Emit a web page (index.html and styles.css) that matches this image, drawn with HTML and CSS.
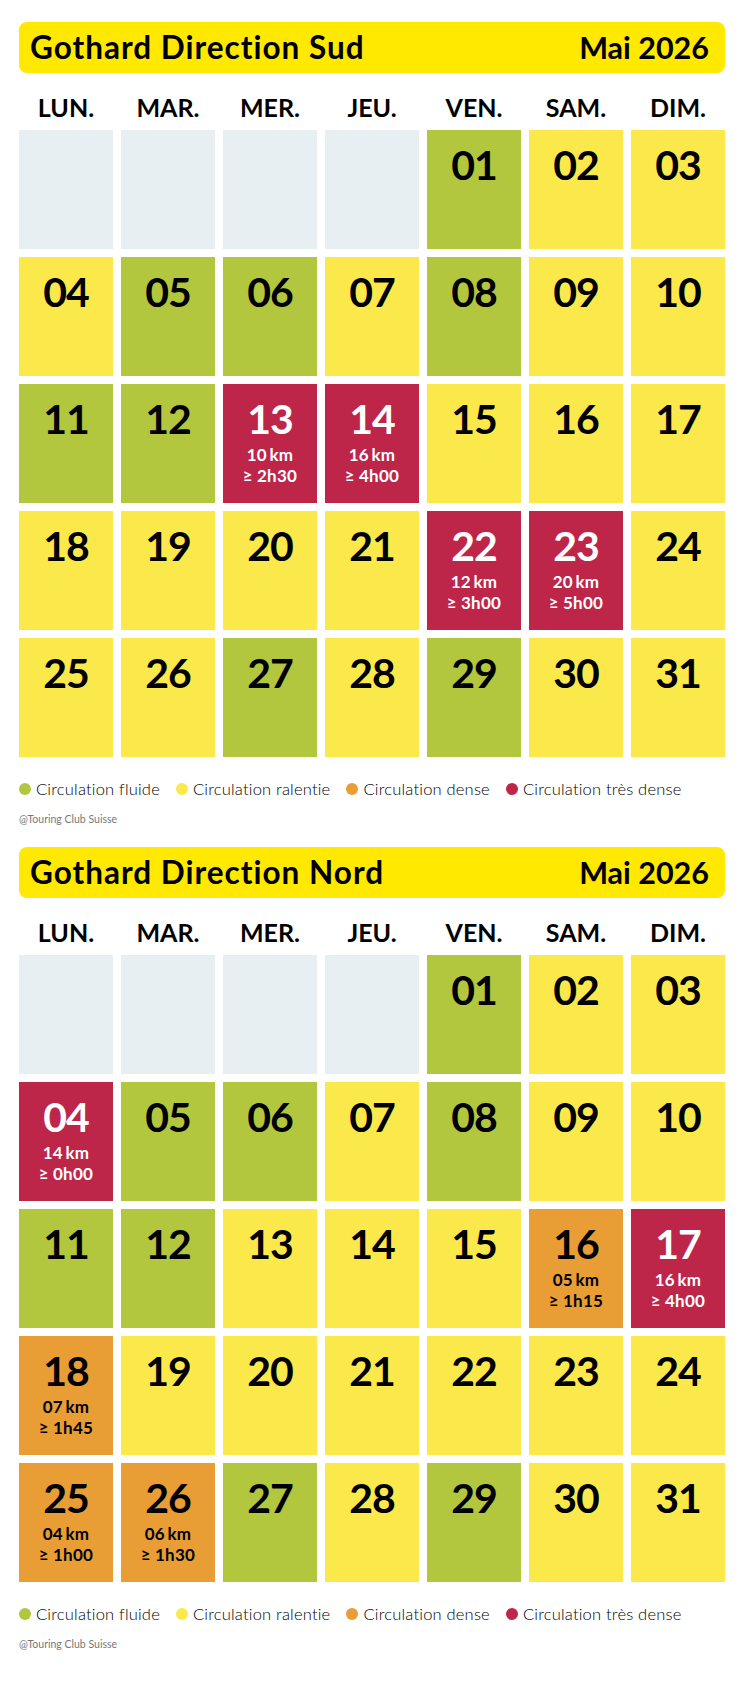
FILE: index.html
```html
<!DOCTYPE html>
<html lang="fr">
<head>
<meta charset="utf-8">
<title>Gothard – Mai 2026</title>
<link rel="stylesheet" href="styles.css">
</head>
<body>
<div class="page">
  <section class="cal">
    <div class="cal-head"><span class="title">Gothard Direction Sud</span><span class="month">Mai 2026</span></div>
    <div class="days"><span>LUN.</span><span>MAR.</span><span>MER.</span><span>JEU.</span><span>VEN.</span><span>SAM.</span><span>DIM.</span></div>
    <div class="grid">
      <div class="cell e"></div><div class="cell e"></div><div class="cell e"></div><div class="cell e"></div>
      <div class="cell g"><span class="n">01</span></div><div class="cell y"><span class="n">02</span></div><div class="cell y"><span class="n">03</span></div>
      <div class="cell y"><span class="n">04</span></div><div class="cell g"><span class="n">05</span></div><div class="cell g"><span class="n">06</span></div><div class="cell y"><span class="n">07</span></div><div class="cell g"><span class="n">08</span></div><div class="cell y"><span class="n">09</span></div><div class="cell y"><span class="n">10</span></div>
      <div class="cell g"><span class="n">11</span></div><div class="cell g"><span class="n">12</span></div>
      <div class="cell r"><span class="n">13</span><span class="s">10&#8201;km</span><span class="s"><span class="ge">≥</span>2h30</span></div>
      <div class="cell r"><span class="n">14</span><span class="s">16&#8201;km</span><span class="s"><span class="ge">≥</span>4h00</span></div>
      <div class="cell y"><span class="n">15</span></div><div class="cell y"><span class="n">16</span></div><div class="cell y"><span class="n">17</span></div>
      <div class="cell y"><span class="n">18</span></div><div class="cell y"><span class="n">19</span></div><div class="cell y"><span class="n">20</span></div><div class="cell y"><span class="n">21</span></div>
      <div class="cell r"><span class="n">22</span><span class="s">12&#8201;km</span><span class="s"><span class="ge">≥</span>3h00</span></div>
      <div class="cell r"><span class="n">23</span><span class="s">20&#8201;km</span><span class="s"><span class="ge">≥</span>5h00</span></div>
      <div class="cell y"><span class="n">24</span></div>
      <div class="cell y"><span class="n">25</span></div><div class="cell y"><span class="n">26</span></div><div class="cell g"><span class="n">27</span></div><div class="cell y"><span class="n">28</span></div><div class="cell g"><span class="n">29</span></div><div class="cell y"><span class="n">30</span></div><div class="cell y"><span class="n">31</span></div>
    </div>
    <div class="legend">
      <span class="item"><i class="dot g"></i>Circulation fluide</span>
      <span class="item"><i class="dot y"></i>Circulation ralentie</span>
      <span class="item"><i class="dot o"></i>Circulation dense</span>
      <span class="item"><i class="dot r"></i>Circulation très dense</span>
    </div>
    <div class="copy">@Touring Club Suisse</div>
  </section>

  <section class="cal">
    <div class="cal-head"><span class="title">Gothard Direction Nord</span><span class="month">Mai 2026</span></div>
    <div class="days"><span>LUN.</span><span>MAR.</span><span>MER.</span><span>JEU.</span><span>VEN.</span><span>SAM.</span><span>DIM.</span></div>
    <div class="grid">
      <div class="cell e"></div><div class="cell e"></div><div class="cell e"></div><div class="cell e"></div>
      <div class="cell g"><span class="n">01</span></div><div class="cell y"><span class="n">02</span></div><div class="cell y"><span class="n">03</span></div>
      <div class="cell r"><span class="n">04</span><span class="s">14&#8201;km</span><span class="s"><span class="ge">≥</span>0h00</span></div>
      <div class="cell g"><span class="n">05</span></div><div class="cell g"><span class="n">06</span></div><div class="cell y"><span class="n">07</span></div><div class="cell g"><span class="n">08</span></div><div class="cell y"><span class="n">09</span></div><div class="cell y"><span class="n">10</span></div>
      <div class="cell g"><span class="n">11</span></div><div class="cell g"><span class="n">12</span></div><div class="cell y"><span class="n">13</span></div><div class="cell y"><span class="n">14</span></div><div class="cell y"><span class="n">15</span></div>
      <div class="cell o"><span class="n">16</span><span class="s">05&#8201;km</span><span class="s"><span class="ge">≥</span>1h15</span></div>
      <div class="cell r"><span class="n">17</span><span class="s">16&#8201;km</span><span class="s"><span class="ge">≥</span>4h00</span></div>
      <div class="cell o"><span class="n">18</span><span class="s">07&#8201;km</span><span class="s"><span class="ge">≥</span>1h45</span></div>
      <div class="cell y"><span class="n">19</span></div><div class="cell y"><span class="n">20</span></div><div class="cell y"><span class="n">21</span></div><div class="cell y"><span class="n">22</span></div><div class="cell y"><span class="n">23</span></div><div class="cell y"><span class="n">24</span></div>
      <div class="cell o"><span class="n">25</span><span class="s">04&#8201;km</span><span class="s"><span class="ge">≥</span>1h00</span></div>
      <div class="cell o"><span class="n">26</span><span class="s">06&#8201;km</span><span class="s"><span class="ge">≥</span>1h30</span></div>
      <div class="cell g"><span class="n">27</span></div><div class="cell y"><span class="n">28</span></div><div class="cell g"><span class="n">29</span></div><div class="cell y"><span class="n">30</span></div><div class="cell y"><span class="n">31</span></div>
    </div>
    <div class="legend">
      <span class="item"><i class="dot g"></i>Circulation fluide</span>
      <span class="item"><i class="dot y"></i>Circulation ralentie</span>
      <span class="item"><i class="dot o"></i>Circulation dense</span>
      <span class="item"><i class="dot r"></i>Circulation très dense</span>
    </div>
    <div class="copy">@Touring Club Suisse</div>
  </section>
</div>
</body>
</html>
```
FILE: styles.css
```css
html, body {
  margin: 0;
  padding: 0;
  background: #fff;
}
body {
  font-family: Lato, "Noto Sans", sans-serif;
  color: #000;
  font-variant-ligatures: none;
}
.page {
  width: 706px;
  margin-left: 19px;
  padding-top: 22px;
}
.cal {
  margin-bottom: 22px;
}
.cal-head {
  height: 51px;
  background: #ffe900;
  border-radius: 8px;
  display: flex;
  justify-content: space-between;
  align-items: center;
  padding: 0 16px 0 11px;
  font-weight: 700;
  line-height: 51px;
}
.title {
  font-size: 31.5px;
  letter-spacing: 1px;
}
.month {
  font-size: 30.5px;
}
.days {
  display: grid;
  grid-template-columns: repeat(7, 94px);
  column-gap: 8px;
  height: 57px;
  box-sizing: border-box;
  padding-top: 22px;
  font-size: 25px;
  font-weight: 700;
  line-height: 24px;
  text-align: center;
}
.grid {
  display: grid;
  grid-template-columns: repeat(7, 94px);
  grid-auto-rows: 119px;
  gap: 8px;
}
.cell {
  display: flex;
  flex-direction: column;
  align-items: center;
  padding-top: 15px;
  box-sizing: border-box;
}
.cell.e { background: #e7eff2; }
.cell.g { background: #b2c73e; }
.cell.y { background: #fbe94c; }
.cell.o { background: #e89d35; }
.cell.r { background: #bd2549; color: #fff; }
.n {
  font-size: 41px;
  font-weight: 700;
  line-height: 40px;
  letter-spacing: -1px;
}
.s {
  font-size: 17px;
  font-weight: 700;
  line-height: 21px;
  letter-spacing: 0.3px;
}
.n + .s {
  margin-top: 5px;
}
.ge {
  margin-right: 4px;
}
.legend {
  display: flex;
  align-items: center;
  margin-top: 22px;
  height: 20px;
  font-size: 16.5px;
  font-weight: 300;
  line-height: 20px;
  letter-spacing: 0.2px;
}
.item {
  display: flex;
  align-items: center;
  margin-right: 16px;
}
.dot {
  width: 12px;
  height: 12px;
  border-radius: 50%;
  margin-right: 5px;
}
.dot.g { background: #b2c73e; }
.dot.y { background: #fbe94c; }
.dot.o { background: #e89d35; }
.dot.r { background: #bd2549; }
.copy {
  margin-top: 14px;
  font-size: 10.5px;
  line-height: 12px;
  color: #777;
}
```
